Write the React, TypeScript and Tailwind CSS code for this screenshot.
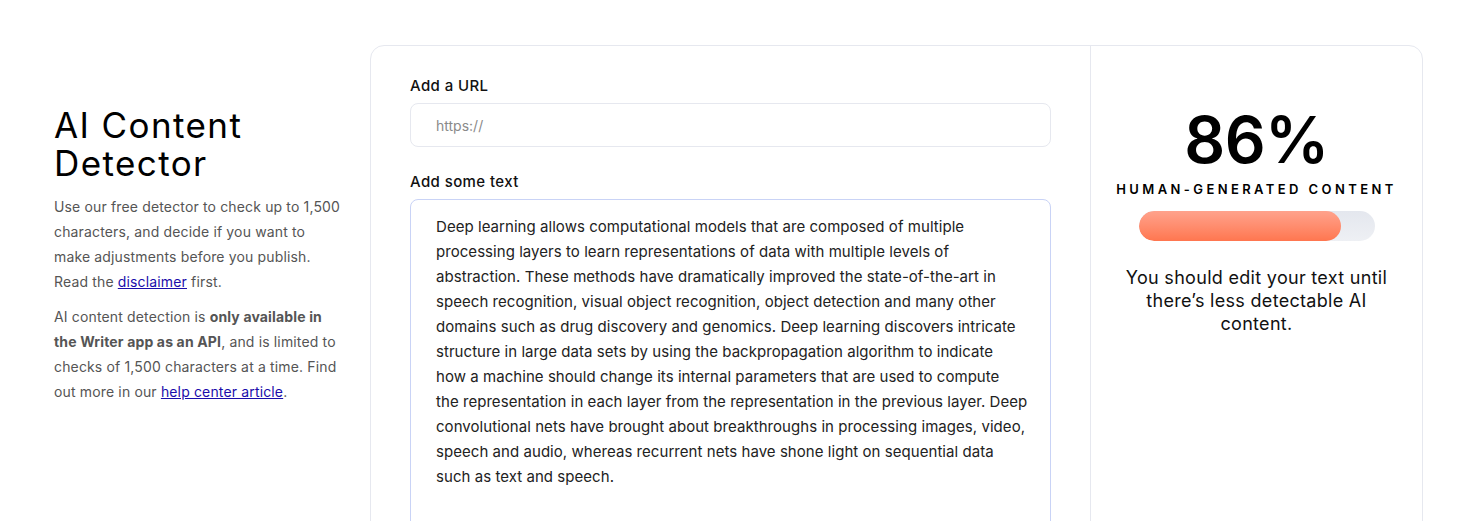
import React, { useState } from 'react';

// Lines broken where the original wraps them
const SAMPLE = [
  'Deep learning allows computational models that are composed of multiple',
  'processing layers to learn representations of data with multiple levels of',
  'abstraction. These methods have dramatically improved the state-of-the-art in',
  'speech recognition, visual object recognition, object detection and many other',
  'domains such as drug discovery and genomics. Deep learning discovers intricate',
  'structure in large data sets by using the backpropagation algorithm to indicate',
  'how a machine should change its internal parameters that are used to compute',
  'the representation in each layer from the representation in the previous layer. Deep',
  'convolutional nets have brought about breakthroughs in processing images, video,',
  'speech and audio, whereas recurrent nets have shone light on sequential data',
  'such as text and speech.',
].join('\n');

export default function App() {
  const [url, setUrl] = useState('');
  const [text, setText] = useState(SAMPLE);
  const score = 86;

  return (
    <div className="min-h-screen bg-white font-['Inter',sans-serif] text-[#111]">
      <div className="flex items-start gap-[28px] px-[54px] pt-[45px]">
        {/* Intro */}
        <aside className="w-[288px] shrink-0 pt-[61px]">
          <h1 className="text-[35px] leading-[38px] font-normal tracking-[1.4px] text-black">AI Content Detector</h1>
          <p className="mt-[12px] text-[14px] leading-[25px] tracking-[0.15px] text-[#555]">
            Use our free detector to check up to 1,500 characters, and decide if you want to make adjustments before
            you publish. Read the{' '}
            <a href="#" className="text-[#1a0dab] underline">
              disclaimer
            </a>{' '}
            first.
          </p>
          <p className="mt-[10px] text-[14px] leading-[25px] tracking-[0.15px] text-[#555]">
            AI content detection is <strong className="font-bold">only available in the Writer app as an API</strong>,
            and is limited to checks of 1,500 characters at a time. Find out more in our{' '}
            <a href="#" className="text-[#1a0dab] underline">
              help center article
            </a>
            .
          </p>
        </aside>

        {/* Detector card */}
        <section className="flex h-[520px] flex-1 rounded-[14px] border border-[#e6e8ef]">
          <div className="w-[719px] shrink-0 px-[39px] pt-[29px]">
            <label className="block text-[15px] leading-[22px] font-medium tracking-[0.4px] text-[#111]">
              Add a URL
            </label>
            <input
              value={url}
              onChange={(e) => setUrl(e.target.value)}
              placeholder="https://"
              className="mt-[6px] h-[44px] w-full rounded-[8px] border border-[#e6e8ef] px-[25px] text-[14px] outline-none placeholder:text-[#8a8a8a]"
            />
            <label className="mt-[24px] block text-[15px] leading-[22px] font-medium tracking-[0.4px] text-[#111]">
              Add some text
            </label>
            <textarea
              value={text}
              wrap="off"
              onChange={(e) => setText(e.target.value)}
              className="mt-[6px] h-[340px] w-full resize-none overflow-hidden rounded-[8px] border border-[#c9d3f6] pt-[14px] pr-[12px] pl-[25px] text-[15px] leading-[25px] tracking-[0.05px] text-[#222] outline-none"
            />
          </div>

          <div className="flex flex-1 flex-col items-center border-l border-[#e6e8ef] pt-[62px]">
            <div className="text-[64px] leading-none font-semibold tracking-[-0.5px] text-black">{score}%</div>
            <div className="mt-[9px] text-[13px] leading-[16px] font-semibold tracking-[3.4px] text-black">
              HUMAN-GENERATED CONTENT
            </div>
            <div className="mt-[14px] h-[30px] w-[236px] overflow-hidden rounded-full bg-gradient-to-b from-[#e4e7ee] to-[#eef0f4]">
              <div
                className="h-full rounded-full bg-gradient-to-b from-[#ffa28c] to-[#ff764f]"
                style={{ width: `${score}%` }}
              />
            </div>
            <p className="mt-[25px] w-[285px] text-center text-[18px] leading-[23px] tracking-[0.3px] text-[#111]">
              You should edit your text until there’s less detectable AI content.
            </p>
          </div>
        </section>
      </div>
    </div>
  );
}
